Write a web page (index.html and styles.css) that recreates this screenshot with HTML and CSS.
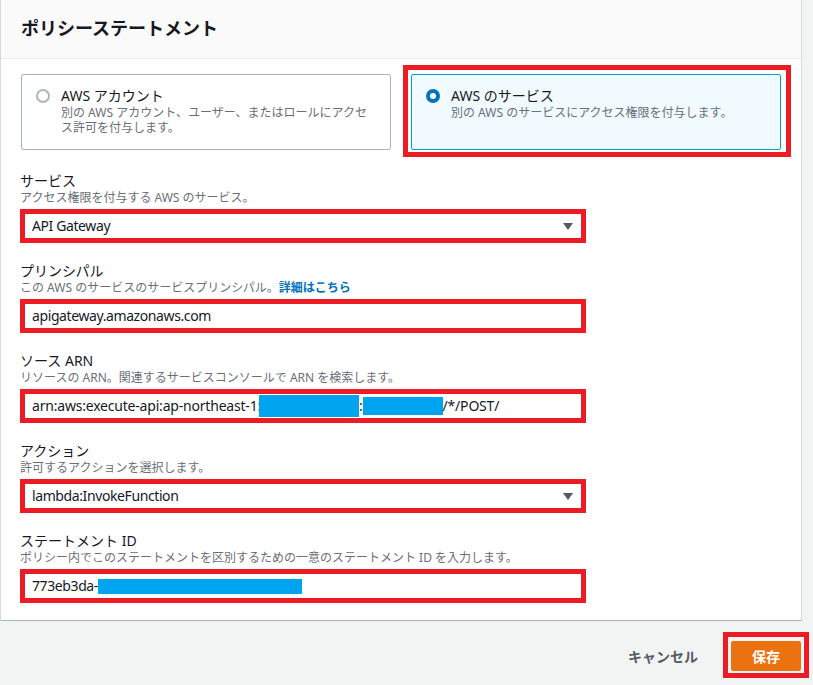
FILE: index.html
```html
<!DOCTYPE html>
<html lang="ja">
<head>
    <meta charset="UTF-8">
    <meta name="viewport" content="width=device-width, initial-scale=1.0">
    <title>ポリシーステートメント</title>
    <link rel="stylesheet" href="styles.css">
</head>
<body>

    <!-- Policy statement panel -->
    <div class="panel">
        <div class="panel-head">
            <h2>ポリシーステートメント</h2>
        </div>

        <div class="panel-body">
            <div class="tiles">
                <div class="tile">
                    <span class="radio"></span>
                    <div class="tile-text">
                        <div class="tile-title">AWS アカウント</div>
                        <div class="tile-desc">別の AWS アカウント、ユーザー、またはロールにアクセス許可を付与します。</div>
                    </div>
                </div>
                <div class="tile selected mark mark-tile">
                    <span class="radio"></span>
                    <div class="tile-text">
                        <div class="tile-title">AWS のサービス</div>
                        <div class="tile-desc">別の AWS のサービスにアクセス権限を付与します。</div>
                    </div>
                </div>
            </div>

            <div class="group">
                <div class="label">サービス</div>
                <div class="desc">アクセス権限を付与する AWS のサービス。</div>
                <div class="field select">
                    <span>API Gateway</span>
                    <span class="caret"></span>
                </div>
            </div>

            <div class="group">
                <div class="label">プリンシパル</div>
                <div class="desc">この AWS のサービスのサービスプリンシパル。<a href="#" class="link">詳細はこちら</a></div>
                <div class="field">apigateway.amazonaws.com</div>
            </div>

            <div class="group">
                <div class="label">ソース ARN</div>
                <div class="desc">リソースの ARN。関連するサービスコンソールで ARN を検索します。</div>
                <div class="field field-arn">arn:aws:execute-api:ap-northeast-1:<span class="mask mask-a"></span>:<span class="mask mask-b"></span>/*/POST/</div>
            </div>

            <div class="group">
                <div class="label">アクション</div>
                <div class="desc">許可するアクションを選択します。</div>
                <div class="field select">
                    <span>lambda:InvokeFunction</span>
                    <span class="caret"></span>
                </div>
            </div>

            <div class="group last">
                <div class="label">ステートメント ID</div>
                <div class="desc">ポリシー内でこのステートメントを区別するための一意のステートメント ID を入力します。</div>
                <div class="field">773eb3da-<span class="mask mask-c"></span></div>
            </div>
        </div>
    </div>

    <!-- Footer buttons -->
    <div class="footer">
        <a href="#" class="cancel">キャンセル</a>
        <button class="btn-primary mark mark-btn">保存</button>
    </div>

</body>
</html>
```

FILE: styles.css
```css
* {
    margin: 0;
    padding: 0;
    box-sizing: border-box;
    font-family: "Noto Sans", "Noto Sans CJK JP", sans-serif;
}
body {
    background: #f2f3f3;
    color: #16191f;
    width: 813px;
    height: 685px;
    overflow: hidden;
}
.panel {
    width: 802px;
    background: white;
    border-left: 1px solid #d5dbdb;
    border-right: 1px solid #d5dbdb;
    border-bottom: 1px solid #aab7b8;
}
.panel-head {
    height: 59px;
    background: #fafafa;
    border-bottom: 1px solid #eaeded;
    padding: 0 20px;
    display: flex;
    align-items: center;
}
.panel-head h2 {
    font-size: 18px;
    font-weight: 700;
    line-height: 22px;
    margin-top: -2px;
}
.panel-body {
    padding: 15px 20px 17px 19px;
}

/* radio tiles */
.tiles {
    display: grid;
    grid-template-columns: 370px 370px;
    gap: 20px;
    margin-left: 1px;
    margin-bottom: 22px;
}
.tile {
    height: 76px;
    border: 1px solid #aab7b8;
    border-radius: 2px;
    padding: 12px 16px 0 14px;
    display: flex;
    align-items: flex-start;
}
.tile.selected {
    background: #f1faff;
    border-color: #00a1c9;
}
.radio {
    width: 14px;
    height: 14px;
    margin-top: 2px;
    margin-right: 11px;
    border: 2px solid #aab7b8;
    border-radius: 50%;
    background: white;
    flex-shrink: 0;
}
.selected .radio {
    border: 4px solid #0073bb;
}
.tile-title {
    font-size: 14px;
    line-height: 18px;
}
.tile-desc {
    font-size: 12px;
    line-height: 15px;
    color: #687078;
}

/* form groups */
.group {
    margin-bottom: 19px;
}
.group.last {
    margin-bottom: 0;
}
.label {
    font-size: 14px;
    line-height: 18px;
}
.desc {
    font-size: 12px;
    line-height: 16px;
    color: #687078;
    margin-bottom: 3px;
}
.link {
    color: #0073bb;
    font-weight: 700;
    text-decoration: none;
}
.field {
    width: 566px;
    height: 34px;
    border: 5px solid #ed1c24;
    background: white;
    padding: 0 7px;
    font-size: 14px;
    line-height: 24px;
    letter-spacing: -0.4px;
    display: flex;
    align-items: center;
    white-space: nowrap;
}
.field-arn {
    letter-spacing: -0.2px;
}
.field.select {
    justify-content: space-between;
    padding-right: 8px;
}
.caret {
    width: 0;
    height: 0;
    border-left: 5px solid transparent;
    border-right: 5px solid transparent;
    border-top: 7px solid #545b64;
}
.mask {
    display: inline-block;
    background: #00a4ef;
}
.mask-a {
    width: 100px;
    height: 22px;
    margin-left: -2px;
}
.mask-b {
    width: 80px;
    height: 18px;
}
.mask-c {
    width: 204px;
    height: 15px;
}

/* footer */
.footer {
    display: flex;
    justify-content: flex-end;
    align-items: center;
    gap: 33px;
    margin-top: 20px;
    padding-right: 12px;
}
.cancel {
    color: #545b64;
    font-size: 14px;
    font-weight: 700;
    text-decoration: none;
}
.btn-primary {
    width: 70px;
    height: 30px;
    background: #ec7211;
    border: 1px solid #ec7211;
    border-radius: 2px;
    color: white;
    font-size: 14px;
    font-weight: 700;
}

/* red annotation boxes drawn over the screenshot */
.mark {
    position: relative;
}
.mark::after {
    content: "";
    position: absolute;
    border: 5px solid #ed1c24;
    pointer-events: none;
}
.mark-tile::after {
    top: -10px;
    right: -11px;
    bottom: -8px;
    left: -9px;
}
.mark-btn::after {
    top: -10px;
    right: -9px;
    bottom: -8px;
    left: -9px;
}
```
